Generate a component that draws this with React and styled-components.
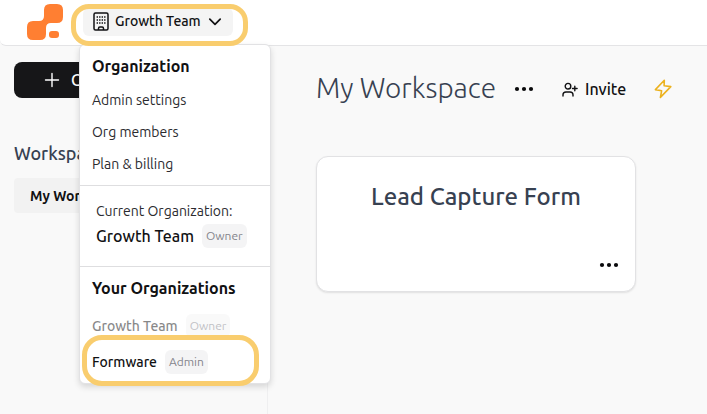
import React from "react";
import styled, { createGlobalStyle } from "styled-components";

const GlobalStyle = createGlobalStyle`
  * { box-sizing: border-box; }
  body {
    margin: 0;
    background: #f9f9f9;
    color: #111113;
    font-family: Ubuntu, "Open Sans", "Noto Sans", sans-serif;
    font-size: 14px;
  }
  h1, h2, h3, p, ul { margin: 0; padding: 0; }
  button { font: inherit; color: inherit; border: 0; background: none; padding: 0; cursor: pointer; }
  svg { display: block; flex: none; }
`;

const Page = styled.div`
  min-height: 100vh;
  display: flex;
  flex-direction: column;
`;

const Header = styled.header`
  height: 46px;
  display: flex;
  align-items: flex-start;
  padding: 4px 27px 0;
  background: #fff;
  border-bottom: 1px solid #e4e4e6;
  border-bottom-left-radius: 6px;
`;

const HomeLink = styled.a`
  display: block;
  margin-right: 20px;
`;

const Switcher = styled.div`
  position: relative;
  padding-top: 4px;
`;

const SwitchButton = styled.button`
  height: 28px;
  width: 150px;
  display: flex;
  align-items: center;
  gap: 6px;
  padding: 0 11px 2px 10px;
  border-radius: 6px;
  background: #f4f4f4;
  white-space: nowrap;
`;

const SwitchLabel = styled.span`
  flex: 1;
  text-align: left;
  font-size: 14px;
  font-weight: 500;
`;

const Ring = styled.span`
  position: absolute;
  z-index: 3;
  inset: ${(p) => p.$inset};
  border: 5px solid #f9cd6e;
  border-radius: ${(p) => p.$radius};
  pointer-events: none;
`;

const Menu = styled.div`
  position: absolute;
  z-index: 2;
  top: 40px;
  left: -4px;
  width: 192px;
  background: #fff;
  border: 1px solid #e2e2e4;
  border-radius: 6px;
  box-shadow: 0 3px 6px rgba(0, 0, 0, 0.14);
`;

const MenuSection = styled.section`
  padding: ${(p) => p.$pad};
  & + & { border-top: 1px solid #dedee0; }
`;

const MenuTitle = styled.h2`
  font-size: 16px;
  line-height: 32px;
  font-weight: 600;
  white-space: nowrap;
  margin-bottom: ${(p) => p.$after};
`;

const MenuItem = styled.button`
  display: block;
  width: 100%;
  height: 32px;
  font-size: 14px;
  text-align: left;
  color: #2b2b2f;
`;

const CurrentLabel = styled.p`
  font-size: 14px;
  line-height: 22px;
  margin-bottom: 2px;
  color: #2b2b2f;
  white-space: nowrap;
`;

const CurrentOrg = styled.div`
  display: flex;
  align-items: center;
  gap: 8px;
  height: 24px;
  font-size: 16px;
  line-height: 26px;
  font-weight: 500;
  white-space: nowrap;
`;

const OrgItem = styled.button`
  position: relative;
  display: flex;
  align-items: center;
  gap: 8px;
  width: 100%;
  height: 36px;
  font-size: 14px;
  font-weight: 500;
  opacity: ${(p) => (p.disabled ? 0.5 : 1)};
  white-space: nowrap;
`;

const Badge = styled.span`
  display: inline-flex;
  align-items: center;
  height: 24px;
  padding: 0 4px;
  border-radius: 6px;
  background: #f4f4f5;
  color: #85858c;
  font-size: 12px;
  line-height: 14px;
  font-weight: 400;
`;

const Body = styled.div`
  flex: 1;
  display: flex;
`;

const Sidebar = styled.aside`
  flex: 0 0 268px;
  padding: 16px 14px;
  border-right: 1px solid #efeff0;
`;

const CreateButton = styled.button`
  width: 100%;
  height: 36px;
  display: flex;
  align-items: center;
  gap: 10px;
  padding: 0 29px;
  border-radius: 8px;
  background: #161618;
  color: #fff;
  font-size: 16px;
  font-weight: 500;
`;

const SideTitle = styled.h2`
  margin: 42px 0 12px;
  font-size: 18px;
  line-height: 26px;
  font-weight: 500;
  color: #374151;
`;

const SideItem = styled.button`
  display: block;
  width: 100%;
  height: 35px;
  padding: 0 16px;
  border-radius: 4px;
  background: #f2f2f2;
  text-align: left;
  font-size: 14px;
  font-weight: 600;
`;

const Main = styled.main`
  flex: 1;
  min-width: 0;
  padding: 22px 32px 32px 48px;
`;

const TitleBar = styled.div`
  display: flex;
  align-items: center;
  height: 42px;
  margin-bottom: 46px;
`;

const Title = styled.h1`
  font-size: 28px;
  line-height: 36px;
  font-weight: 300;
  color: #374151;
  white-space: nowrap;
  padding-bottom: 2px;
  margin-right: 18px;
`;

const IconButton = styled.button`
  display: flex;
`;

const InviteButton = styled.button`
  display: flex;
  align-items: center;
  gap: 7px;
  margin: 0 28px;
  font-size: 16px;
  font-weight: 500;
`;

const Cards = styled.div`
  display: grid;
  grid-template-columns: repeat(auto-fill, minmax(280px, 320px));
  gap: 24px;
`;

const Card = styled.article`
  min-height: 136px;
  display: flex;
  flex-direction: column;
  justify-content: space-between;
  padding: 24px 16px 22px;
  background: #fff;
  border: 1px solid #e2e2e4;
  border-radius: 12px;
  box-shadow: 0 1px 2px rgba(0, 0, 0, 0.1);
`;

const CardTitle = styled.h3`
  font-size: 24px;
  line-height: 32px;
  font-weight: 500;
  color: #374151;
  text-align: center;
  white-space: nowrap;
`;

const CardFooter = styled.div`
  display: flex;
  justify-content: flex-end;
`;

const Logo = () => (
  <svg width="36" height="36" viewBox="0 0 36 36" fill="#ff7f32" aria-hidden="true">
    <path d="M23 0h7q6 0 6 6v7q0 6-6 6h-6q-5 0-5 5v6q0 6-6 6H6q-6 0-6-6v-7q0-6 6-6h6q5 0 5-5V6q0-6 6-6z" />
    <rect x="22" y="27" width="10" height="7" rx="3" />
  </svg>
);

const BuildingIcon = () => (
  <svg width="16" height="19" viewBox="0 0 16 19" fill="none" stroke="#111113" strokeWidth="1.5" aria-hidden="true">
    <rect x="1" y="1" width="14" height="17" rx="1.5" />
    <path d="M5.5 18v-1.6q0-1.4 1.4-1.4h2.2q1.4 0 1.4 1.4V18" />
    <path d="M3.6 5h1.4M6.1 5h1.4M8.6 5H10M11.1 5h1.4M3.6 8h1.4M6.1 8h1.4M8.6 8H10M11.1 8h1.4M3.6 11h1.4M6.1 11h1.4M8.6 11H10M11.1 11h1.4" strokeWidth="1.4" />
  </svg>
);

const ChevronIcon = () => (
  <svg width="14" height="14" viewBox="0 0 14 14" fill="none" stroke="#111113" strokeWidth="1.7" strokeLinecap="round" strokeLinejoin="round" aria-hidden="true">
    <path d="M1.8 5.2L7 10.4l5.2-5.2" />
  </svg>
);

const PlusIcon = () => (
  <svg width="18" height="18" viewBox="0 0 18 18" fill="none" stroke="currentColor" strokeWidth="1.4" strokeLinecap="round" aria-hidden="true">
    <path d="M9 2.5v13M2.5 9h13" />
  </svg>
);

const DotsIcon = () => (
  <svg width="20" height="8" viewBox="0 0 20 8" fill="#09090b" aria-hidden="true">
    <circle cx="3" cy="4" r="2.1" />
    <circle cx="10" cy="4" r="2.1" />
    <circle cx="17" cy="4" r="2.1" />
  </svg>
);

const InviteIcon = () => (
  <svg width="16" height="15" viewBox="0 0 16 15" fill="none" stroke="#111113" strokeWidth="1.4" strokeLinecap="round" strokeLinejoin="round" aria-hidden="true">
    <circle cx="6" cy="4.2" r="2.8" />
    <path d="M1 14v-1.2c0-1.8 1.2-2.8 3-2.8h4c1.8 0 3 1 3 2.8V14M12.8 4.2v4.6M10.5 6.5h4.6" />
  </svg>
);

const BoltIcon = () => (
  <svg width="18" height="20" viewBox="0 0 18 20" fill="none" stroke="#ecb21f" strokeWidth="1.6" strokeLinejoin="round" aria-hidden="true">
    <path d="M10.3 1.2L1.4 10.6l6.2 1.2-1.2 6.6L16.8 7.6l-6.7-.9z" />
  </svg>
);

const SETTINGS = ["Admin settings", "Org members", "Plan & billing"];

export default function App() {
  return (
    <Page>
      <GlobalStyle />
      <Header>
        <HomeLink href="#" aria-label="Home"><Logo /></HomeLink>
        <Switcher>
          <SwitchButton aria-expanded="true" aria-haspopup="true">
            <BuildingIcon />
            <SwitchLabel>Growth Team</SwitchLabel>
            <ChevronIcon />
          </SwitchButton>
          <Ring $inset="0 -15px -10px -12px" $radius="18px" />
          <Menu>
            <MenuSection $pad="5px 12px">
              <MenuTitle $after="2px">Organization</MenuTitle>
              {SETTINGS.map((label) => <MenuItem key={label}>{label}</MenuItem>)}
            </MenuSection>
            <MenuSection $pad="14px 16px 18px">
              <CurrentLabel>Current Organization:</CurrentLabel>
              <CurrentOrg>Growth Team <Badge>Owner</Badge></CurrentOrg>
            </MenuSection>
            <MenuSection $pad="5px 12px 3px">
              <MenuTitle $after="4px">Your Organizations</MenuTitle>
              <OrgItem disabled>Growth Team <Badge>Owner</Badge></OrgItem>
              <OrgItem>
                Formware <Badge>Admin</Badge>
                <Ring $inset="-9px -1px -6px -10px" $radius="20px" />
              </OrgItem>
            </MenuSection>
          </Menu>
        </Switcher>
      </Header>
      <Body>
        <Sidebar>
          <CreateButton><PlusIcon />Create form</CreateButton>
          <SideTitle>Workspaces</SideTitle>
          <SideItem>My Workspace</SideItem>
        </Sidebar>
        <Main>
          <TitleBar>
            <Title>My Workspace</Title>
            <IconButton aria-label="Workspace options"><DotsIcon /></IconButton>
            <InviteButton><InviteIcon />Invite</InviteButton>
            <IconButton aria-label="Automations"><BoltIcon /></IconButton>
          </TitleBar>
          <Cards>
            <Card>
              <CardTitle>Lead Capture Form</CardTitle>
              <CardFooter>
                <IconButton aria-label="Form options"><DotsIcon /></IconButton>
              </CardFooter>
            </Card>
          </Cards>
        </Main>
      </Body>
    </Page>
  );
}
